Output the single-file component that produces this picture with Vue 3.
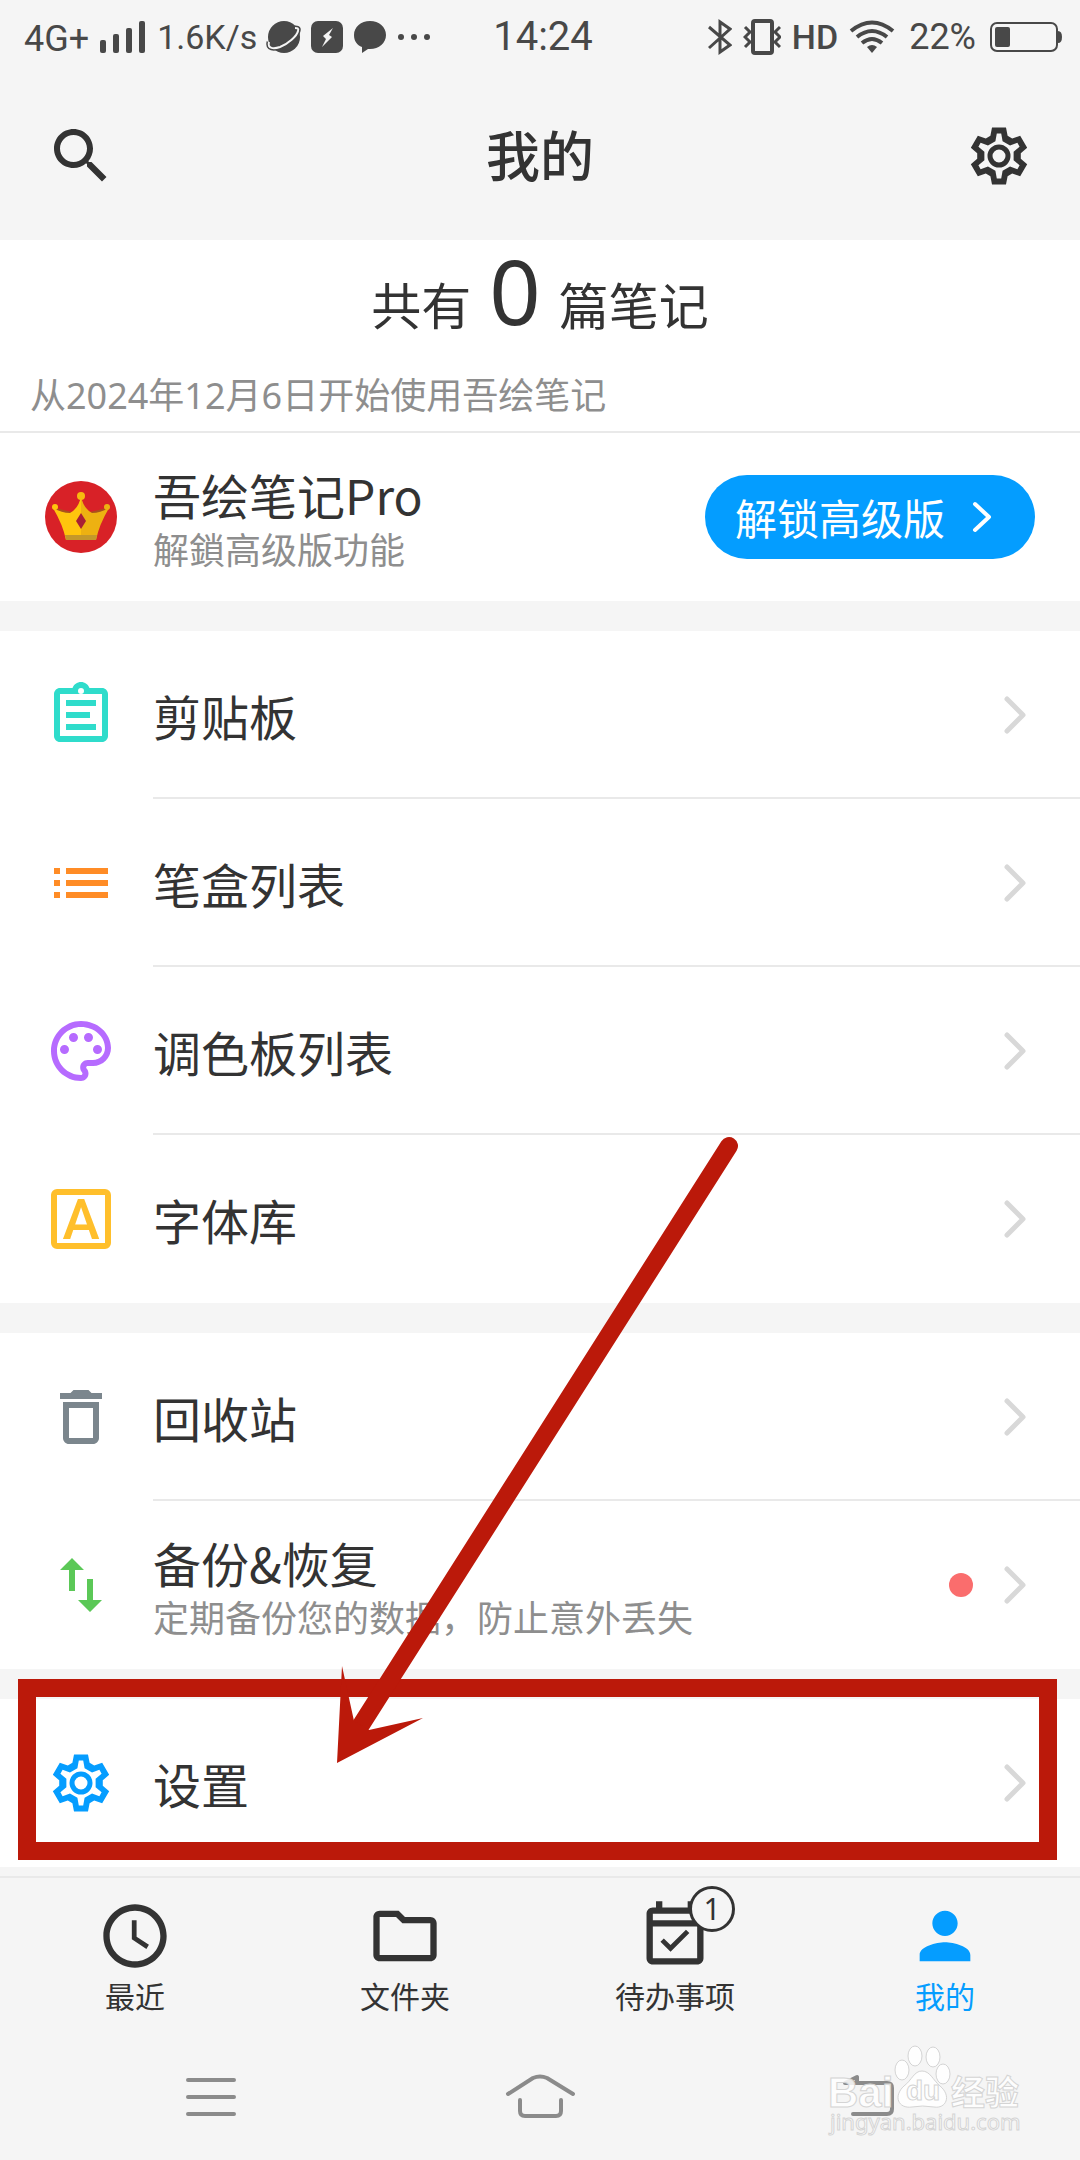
<script setup>
const tooth = (points) => {
  const out = []
  for (let i = 0; i < 6; i++) {
    const a = (i * Math.PI) / 3
    for (const [x, y] of points) {
      const px = 36 + x * Math.cos(a) - y * Math.sin(a)
      const py = 36 + x * Math.sin(a) + y * Math.cos(a)
      out.push(`${px.toFixed(2)} ${py.toFixed(2)}`)
    }
  }
  return `M${out.join('L')}Z`
}

const gearPath =
  tooth([[-8.6, -20.2], [-7, -28.5], [7, -28.5], [8.6, -20.2]]) +
  tooth([[-3.6, -14.8], [-2.2, -22.5], [2.2, -22.5], [3.6, -14.8]])

const icons = {
  clipboard:
    'M19 3h-4.18C14.4 1.84 13.3 1 12 1s-2.4.84-2.82 2H5c-1.1 0-2 .9-2 2v14c0 1.1.9 2 2 2h14c1.1 0 2-.9 2-2V5c0-1.1-.9-2-2-2zM12 3a1 1 0 1 1 0 2a1 1 0 1 1 0-2zM19 19H5V5h14v14zM7 7h10v2H7zM7 11h8v2H7zM7 15h10v2H7z',
  list: 'M3 7h2v2H3zM3 11h2v2H3zM3 15h2v2H3zM7 7h14v2H7zM7 11h14v2H7zM7 15h14v2H7z',
  palette:
    'M12 22C6.49 22 2 17.51 2 12S6.49 2 12 2s10 4.04 10 9c0 3.31-2.69 6-6 6h-1.77c-.28 0-.5.22-.5.5 0 .12.05.23.13.33.41.47.64 1.06.64 1.67 0 1.38-1.12 2.5-2.5 2.5zm0-18c-4.41 0-8 3.59-8 8s3.59 8 8 8c.28 0 .5-.22.5-.5 0-.16-.08-.28-.14-.35-.41-.46-.63-1.05-.63-1.65 0-1.38 1.12-2.5 2.5-2.5H16c2.21 0 4-1.79 4-4 0-3.86-3.59-7-8-7zM6.5 10a1.5 1.5 0 1 1 0 3a1.5 1.5 0 1 1 0-3zM9.5 6a1.5 1.5 0 1 1 0 3a1.5 1.5 0 1 1 0-3zM14.5 6a1.5 1.5 0 1 1 0 3a1.5 1.5 0 1 1 0-3zM17.5 10a1.5 1.5 0 1 1 0 3a1.5 1.5 0 1 1 0-3z',
  trash:
    'M6 19c0 1.1.9 2 2 2h8c1.1 0 2-.9 2-2V7H6v12zM8 9h8v10H8V9zm7.5-5l-1-1h-5l-1 1H5v2h14V4h-3.5z',
  swap: 'M16 17.01V10h-2v7.01h-3L15 21l4-3.99h-3zM9 3L5 6.99h3V14h2V6.99h3L9 3z',
}

const groups = [
  [
    { icon: 'clipboard', color: '#2fdccb', label: '剪贴板' },
    { icon: 'list', color: '#ff8c26', label: '笔盒列表' },
    { icon: 'palette', color: '#b66bff', label: '调色板列表' },
    { icon: 'font', color: '#ffbf2b', label: '字体库' },
  ],
  [
    { icon: 'trash', color: '#7b868d', label: '回收站' },
    { icon: 'swap', color: '#5bc857', label: '备份&恢复', note: '定期备份您的数据，防止意外丢失', dot: true },
  ],
  [{ icon: 'gear', color: '#059dff', label: '设置', marked: true }],
]

const tabs = [
  {
    label: '最近',
    path: 'M12 2C6.5 2 2 6.5 2 12s4.5 10 10 10 10-4.5 10-10S17.5 2 12 2zm0 18c-4.4 0-8-3.6-8-8s3.6-8 8-8 8 3.6 8 8-3.6 8-8 8zM12.5 7H11v6l4.6 3.1.8-1.3-3.9-2.6z',
  },
  {
    label: '文件夹',
    path: 'M9.17 6l2 2H20v10H4V6h5.17M10 4H4c-1.1 0-1.99.9-1.99 2L2 18c0 1.1.9 2 2 2h16c1.1 0 2-.9 2-2V8c0-1.1-.9-2-2-2h-8l-2-2z',
  },
  {
    label: '待办事项',
    badge: 1,
    path: 'M16.53 11.06L15.47 10l-4.88 4.88-2.12-2.12-1.06 1.06L10.59 17l5.94-5.94zM19 3h-1V1h-2v2H8V1H6v2H5c-1.11 0-1.99.9-1.99 2L3 19c0 1.1.89 2 2 2h14c1.1 0 2-.9 2-2V5c0-1.1-.9-2-2-2zm0 16H5V9h14v10zm0-12H5V5h14v2z',
  },
  {
    label: '我的',
    active: true,
    path: 'M12 12c2.2 0 4-1.8 4-4s-1.8-4-4-4-4 1.8-4 4 1.8 4 4 4zm0 2c-2.7 0-8 1.3-8 4v2h16v-2c0-2.7-5.3-4-8-4z',
  },
]
</script>

<template>
  <div class="page">
    <div class="status">
      <div class="status-side">
        <span class="net">4G+</span>
        <svg class="signal" width="46" height="32" viewBox="0 0 46 32" fill="currentColor">
          <rect x="0" y="19" width="6" height="13" rx="2" />
          <rect x="13" y="13" width="6" height="19" rx="2" />
          <rect x="26" y="7" width="6" height="25" rx="2" />
          <rect x="39" y="0" width="6" height="32" rx="2" />
        </svg>
        <span class="speed">1.6K/s</span>
        <svg class="planet" width="32" height="32" viewBox="0 0 32 32" fill="none">
          <circle cx="16" cy="16" r="16" fill="currentColor" />
          <path d="M1 21C-1 28 6 28 12 26C20 23 29 15 30 10C31 7 29 7 27 7" stroke="currentColor" stroke-width="5" />
          <path d="M1 21C-1 28 6 28 12 26C20 23 29 15 30 10C31 7 29 7 27 7" stroke="#f5f5f5" stroke-width="2" />
        </svg>
        <svg width="32" height="32" viewBox="0 0 32 32">
          <rect width="32" height="32" rx="7" fill="currentColor" />
          <path d="M22 7L12 15L15 18L11 26L21 16L18 14Z" fill="#f5f5f5" />
        </svg>
        <svg width="32" height="32" viewBox="0 0 32 32" fill="currentColor">
          <path d="M16 0C25 0 32 6 32 14S25 28 16 28L14 28L8 32L8 26C3 24 0 20 0 14C0 6 7 0 16 0Z" />
        </svg>
        <svg width="34" height="8" viewBox="0 0 34 8" fill="currentColor">
          <circle cx="4" cy="4" r="3" />
          <circle cx="17" cy="4" r="3" />
          <circle cx="30" cy="4" r="3" />
        </svg>
      </div>
      <span class="time">14:24</span>
      <div class="status-side right">
        <svg width="24" height="36" viewBox="0 0 24 36" fill="none" stroke="currentColor" stroke-width="3">
          <path d="M1 8L22 26L12 33V3L22 10L1 29" />
        </svg>
        <svg width="38" height="36" viewBox="0 0 38 36" fill="none" stroke="currentColor" stroke-width="3">
          <rect x="10" y="2" width="19" height="32" rx="2" stroke-width="4" />
          <path d="M2 8L7 13L2 18L7 23L2 28M37 8L32 13L37 18L32 23L37 28" />
        </svg>
        <span class="hd">HD</span>
        <svg width="46" height="34" viewBox="0 0 46 34" fill="none" stroke="currentColor" stroke-width="4">
          <path d="M2 11Q23 -6 44 11" />
          <path d="M8 17Q23 5 38 17" />
          <path d="M13 23Q23 15 33 23" />
          <path d="M18 27Q23 23 28 27L23 33Z" fill="currentColor" stroke="none" />
        </svg>
        <span class="percent">22%</span>
        <svg width="72" height="32" viewBox="0 0 72 32">
          <rect x="1" y="2" width="66" height="28" rx="6" fill="none" stroke="currentColor" stroke-width="2" />
          <rect x="5" y="6" width="15" height="20" rx="2" fill="currentColor" />
          <path d="M68 10Q72 10 72 16T68 22Z" fill="currentColor" />
        </svg>
      </div>
    </div>

    <header class="header">
      <button class="icon-button" type="button" aria-label="搜索">
        <svg width="72" height="72" viewBox="0 0 24 24" fill="currentColor">
          <path d="M15.5 14h-.79l-.28-.27C15.41 12.59 16 11.11 16 9.5 16 5.91 13.09 3 9.5 3S3 5.91 3 9.5 5.91 16 9.5 16c1.61 0 3.09-.59 4.23-1.57l.27.28v.79l5 4.99L20.49 19l-4.99-5zm-6 0C7.01 14 5 11.99 5 9.5S7.01 5 9.5 5 14 7.01 14 9.5 11.99 14 9.5 14z" />
        </svg>
      </button>
      <h1>我的</h1>
      <button class="icon-button" type="button" aria-label="设置">
        <svg width="72" height="72" viewBox="0 0 72 72">
          <path :d="gearPath" fill="currentColor" fill-rule="evenodd" />
          <circle cx="36" cy="36" r="9" fill="none" stroke="currentColor" stroke-width="5" />
        </svg>
      </button>
    </header>

    <main>
      <section class="stats">
        <p class="count">共有<span>0</span>篇笔记</p>
        <p class="since">从2024年12月6日开始使用吾绘笔记</p>
      </section>

      <section class="group">
        <div class="row">
          <svg width="72" height="72" viewBox="0 0 72 72">
            <circle cx="36" cy="36" r="36" fill="#d82127" />
            <path d="M10 27L27 31L20 36ZM62 27L45 31L52 36Z" fill="#a8521c" />
            <path d="M8 27Q17 32 25 32Q34 27 36 15V59H21Q18 44 8 27Z" fill="#ffc50d" />
            <path d="M64 27Q55 32 47 32Q38 27 36 15V59H51Q54 44 64 27Z" fill="#edb111" />
            <circle cx="10" cy="26" r="3" fill="#ffc50d" />
            <circle cx="62" cy="26" r="3" fill="#edb111" />
            <circle cx="36" cy="15" r="4" fill="#f7bb0f" />
            <path d="M20 54H52L51 59H21Z" fill="#c4982a" />
            <path d="M36 32L41 40L36 48L31 40Z" fill="#a81e35" />
          </svg>
          <div class="row-body">
            <div class="texts">
              <span class="label">吾绘笔记Pro</span>
              <span class="note">解鎖高级版功能</span>
            </div>
            <button class="unlock" type="button">
              解锁高级版
              <svg width="24" height="36" viewBox="0 0 24 36" fill="none" stroke="currentColor" stroke-width="4" stroke-linecap="round" stroke-linejoin="round">
                <path d="M4 5L18 18L4 31" />
              </svg>
            </button>
          </div>
        </div>
      </section>

      <section v-for="(group, g) in groups" :key="g" class="group">
        <a v-for="item in group" :key="item.label" class="row" href="#">
          <svg v-if="item.icon === 'gear'" width="72" height="72" viewBox="0 0 72 72" :style="{ color: item.color }">
            <path :d="gearPath" fill="currentColor" fill-rule="evenodd" />
            <circle cx="36" cy="36" r="9" fill="none" stroke="currentColor" stroke-width="5" />
          </svg>
          <svg v-else-if="item.icon === 'font'" width="72" height="72" viewBox="0 0 72 72" :style="{ color: item.color }">
            <rect x="9" y="9" width="54" height="54" rx="3" fill="none" stroke="currentColor" stroke-width="6" />
            <text class="letter" x="36" y="56" text-anchor="middle" fill="currentColor">A</text>
          </svg>
          <svg v-else width="72" height="72" viewBox="0 0 24 24" :style="{ color: item.color }">
            <path :d="icons[item.icon]" fill="currentColor" fill-rule="evenodd" />
          </svg>
          <div class="row-body">
            <div class="texts">
              <span class="label">{{ item.label }}</span>
              <span v-if="item.note" class="note">{{ item.note }}</span>
            </div>
            <i v-if="item.dot" class="dot"></i>
            <svg class="chevron" width="24" height="42" viewBox="0 0 24 42">
              <path d="M3 5L19 21L3 37" />
            </svg>
          </div>
        </a>
        <template v-if="group[0].marked">
          <div class="frame"></div>
          <svg class="arrow" width="410" height="640" viewBox="0 0 410 640" fill="#bb190a">
            <path d="M399 16L31 595" fill="none" stroke="#bb190a" stroke-width="18" stroke-linecap="round" />
            <path d="M7 633L12 536L24 591L39 600L93 588Z" />
          </svg>
        </template>
      </section>
    </main>

    <nav class="tabs">
      <a v-for="tab in tabs" :key="tab.label" href="#" :class="['tab', { active: tab.active }]">
        <span class="tab-icon">
          <svg width="76" height="76" viewBox="0 0 24 24"><path :d="tab.path" fill="currentColor" fill-rule="evenodd" /></svg>
          <span v-if="tab.badge" class="badge">{{ tab.badge }}</span>
        </span>
        {{ tab.label }}
      </a>
    </nav>

    <footer class="system">
      <button type="button" aria-label="菜单">
        <svg width="72" height="48" viewBox="0 0 72 48"><path d="M13 7H59M13 24H59M13 41H59" /></svg>
      </button>
      <button type="button" aria-label="主页">
        <svg width="72" height="48" viewBox="0 0 72 48">
          <path d="M4 21L29 5Q36 2 43 5L69 21M16 27V38Q16 43 21 43H52Q57 43 57 38V27" />
        </svg>
      </button>
      <button type="button" aria-label="返回">
        <svg width="72" height="48" viewBox="0 0 72 48">
          <path d="M20 41H54Q59 41 59 36V15Q59 10 54 10H12L24 4V10" />
        </svg>
      </button>
      <svg class="watermark" width="204" height="110" viewBox="0 0 204 110">
        <text class="brand" x="2" y="71">Bai</text>
        <ellipse cx="76" cy="34" rx="7" ry="10" />
        <ellipse cx="89" cy="20" rx="7" ry="10" />
        <ellipse cx="107" cy="21" rx="7" ry="10" />
        <ellipse cx="117" cy="38" rx="7" ry="10" />
        <path d="M96 35C104 35 107 44 114 50C126 60 120 73 108 71Q96 69 86 71C72 73 67 60 78 50C86 44 88 35 96 35Z" />
        <text class="du" x="80" y="64">du</text>
        <text class="brand-cn" x="125" y="69">经验</text>
        <text class="site" x="4" y="94">jingyan.baidu.com</text>
      </svg>
    </footer>
  </div>
</template>

<style>
body {
  margin: 0;
  background: #f5f5f5;
}
</style>

<style scoped>
.page {
  display: flex;
  flex-direction: column;
  min-height: 100vh;
  overflow-x: hidden;
  background: #f5f5f5;
  color: #333;
  font-family: "Noto Sans CJK SC", "Noto Sans", sans-serif;
}
a {
  color: inherit;
  text-decoration: none;
}
button {
  padding: 0;
  border: 0;
  background: none;
  color: inherit;
  font: inherit;
}
svg {
  display: block;
  flex: none;
}
p,
h1 {
  margin: 0;
}

.status {
  display: grid;
  grid-template-columns: 1fr auto 1fr;
  align-items: center;
  height: 74px;
  padding: 0 18px 0 24px;
  color: #484848;
  font-family: Roboto, sans-serif;
  font-size: 36px;
  line-height: 40px;
}
.status-side {
  display: flex;
  align-items: center;
  gap: 11px;
}
.status-side.right {
  justify-content: flex-end;
}
.net {
  padding-top: 4px;
}
.speed {
  font-size: 34px;
}
.planet {
  overflow: visible;
}
.time {
  font-size: 40px;
}
.hd {
  font-size: 34px;
  font-weight: 500;
}
.percent {
  margin: 0 3px;
}

.header {
  display: flex;
  align-items: center;
  justify-content: space-between;
  height: 164px;
  padding: 0 45px 2px;
}
.header h1 {
  padding-bottom: 4px;
  font-size: 54px;
  font-weight: 500;
  line-height: 72px;
}

main {
  flex: 1;
}
.stats {
  padding: 2px 30px 12px;
  border-bottom: 2px solid #e9e9e9;
  background: #fff;
}
.count {
  display: flex;
  align-items: baseline;
  justify-content: center;
  height: 96px;
  font-size: 50px;
  line-height: 60px;
}
.count span {
  margin: 0 18px;
  font-family: "Noto Sans", sans-serif;
  font-size: 90px;
  line-height: 96px;
}
.since {
  margin-top: 35px;
  color: #8e8e8e;
  font-family: "Noto Sans", "Noto Sans CJK SC", sans-serif;
  font-size: 36px;
  line-height: 46px;
}

.group {
  position: relative;
  background: #fff;
}
.group + .group {
  margin-top: 30px;
}
.row {
  display: flex;
  align-items: center;
  gap: 36px;
  min-height: 168px;
  padding-left: 45px;
}
.row-body {
  display: flex;
  flex: 1;
  align-items: center;
  align-self: stretch;
  padding-right: 52px;
}
.row:not(:last-of-type) .row-body {
  box-shadow: inset 0 -2px #e9e9e9;
}
.texts {
  display: flex;
  flex: 1;
  flex-direction: column;
}
.label {
  font-size: 48px;
  line-height: 62px;
}
.note {
  color: #8e8e8e;
  font-size: 36px;
  line-height: 46px;
}
.letter {
  font-family: Roboto, sans-serif;
  font-size: 56px;
  font-weight: 500;
}
.dot {
  width: 24px;
  height: 24px;
  margin-right: 31px;
  border-radius: 50%;
  background: #fa6d6d;
}
.chevron {
  fill: none;
  stroke: #d8d8d8;
  stroke-width: 5;
  stroke-linecap: round;
  stroke-linejoin: round;
}
.unlock {
  display: flex;
  align-items: center;
  gap: 26px;
  height: 84px;
  margin-right: -7px;
  padding: 0 40px 0 30px;
  border-radius: 42px;
  background: #049dff;
  color: #fff;
  font-size: 42px;
  line-height: 60px;
}
.frame {
  position: absolute;
  inset: -20px 23px 7px 18px;
  border: 18px solid #bb190a;
  pointer-events: none;
}
.arrow {
  position: absolute;
  bottom: 97px;
  left: 330px;
  pointer-events: none;
}

.tabs {
  display: grid;
  grid-template-columns: repeat(4, 1fr);
  padding: 20px 0 19px;
  border-top: 2px solid #e9e9e9;
}
.tab {
  display: flex;
  flex-direction: column;
  align-items: center;
  gap: 1px;
  font-size: 30px;
  line-height: 40px;
}
.tab.active {
  color: #059dff;
}
.tab-icon {
  position: relative;
}
.badge {
  position: absolute;
  top: -12px;
  right: -22px;
  width: 40px;
  height: 40px;
  border: 3px solid #333;
  border-radius: 50%;
  background: #f5f5f5;
  font-family: "Noto Sans", sans-serif;
  font-size: 30px;
  line-height: 40px;
  text-align: center;
}

.system {
  position: relative;
  display: flex;
  align-items: center;
  justify-content: space-between;
  height: 126px;
  padding: 0 175px;
}
.system button svg {
  fill: none;
  stroke: #8b8b8b;
  stroke-width: 4;
  stroke-linecap: round;
  stroke-linejoin: round;
}
.watermark {
  position: absolute;
  right: 50px;
  bottom: 14px;
  fill: rgba(255, 255, 255, 0.85);
  stroke: #d4d4d4;
  stroke-width: 1;
  pointer-events: none;
}
.brand {
  font-family: "Liberation Sans", sans-serif;
  font-size: 42px;
  font-weight: 700;
}
.du {
  font-family: "Liberation Sans", sans-serif;
  font-size: 28px;
  font-weight: 700;
}
.brand-cn {
  font-size: 34px;
  font-weight: 700;
}
.site {
  font-family: "Noto Sans", sans-serif;
  font-size: 22px;
}
</style>
